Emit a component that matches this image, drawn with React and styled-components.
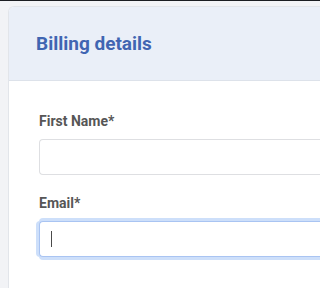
import React from 'react';
import styled, { createGlobalStyle } from 'styled-components';

const GlobalStyle = createGlobalStyle`
  html, body {
    margin: 0;
    padding: 0;
    height: 100%;
  }
  body {
    box-sizing: border-box;
    background-color: #f2f3f6;
    border-top: 1px solid #1b1d22;
    font-family: Roboto, "Liberation Sans", Arial, sans-serif;
    overflow: hidden;
  }
  #root {
    height: 100%;
  }
`;

function App() {
    const fields = [
        { id: 'firstName', label: 'First Name*', focused: false },
        { id: 'email', label: 'Email*', focused: true }
    ];

    return (
        <>
            <GlobalStyle />
            <Page>
                <Card>
                    <CardHeader>
                        <CardTitle>Billing details</CardTitle>
                    </CardHeader>
                    <CardBody>
                        {fields.map(field => (
                            <Field key={field.id}>
                                <Label htmlFor={field.id}>{field.label}</Label>
                                <InputWrap>
                                    <Input id={field.id} type="text" focused={field.focused} readOnly />
                                    {field.focused && <Caret />}
                                </InputWrap>
                            </Field>
                        ))}
                    </CardBody>
                </Card>
            </Page>
        </>
    );
}

const Page = styled.div`
  box-sizing: border-box;
  display: flex;
  height: 100%;
  padding: 5px 0 0 8px;
  overflow: hidden;
`;

const Card = styled.div`
  flex: 1;
  display: flex;
  flex-direction: column;
  background-color: #ffffff;
  border: 1px solid #e2e5ea;
  border-right: none;
  border-bottom: none;
  border-radius: 6px 0 0 0;
  overflow: hidden;
`;

const CardHeader = styled.div`
  display: flex;
  align-items: center;
  height: 73px;
  padding-left: 27px;
  background-color: #eaeff8;
  border-bottom: 1px solid #dde2ea;
`;

const CardTitle = styled.h2`
  margin: 0;
  font-size: 19px;
  font-weight: 700;
  color: #4065b2;
`;

const CardBody = styled.div`
  display: flex;
  flex-direction: column;
  gap: 20px;
  padding: 32px 0 0 30px;
`;

const Field = styled.div`
  display: flex;
  flex-direction: column;
`;

const Label = styled.label`
  font-size: 14px;
  font-weight: 700;
  color: #565656;
  margin-bottom: 10px;
`;

const InputWrap = styled.div`
  position: relative;
  padding-right: 0;
`;

const Input = styled.input`
  box-sizing: border-box;
  width: 100%;
  height: 36px;
  padding: 0 12px;
  font-family: inherit;
  font-size: 14px;
  caret-color: transparent;
  background-color: #ffffff;
  border: 1px solid ${props => props.focused ? '#a9c4f2' : '#dedfe2'};
  border-right: none;
  border-radius: 4px 0 0 4px;
  box-shadow: ${props => props.focused ? '-3px 0 0 0 #cddffa, 0 3px 0 0 #cddffa, 0 -3px 0 0 #cddffa' : 'none'};
  outline: none;
`;

const Caret = styled.span`
  position: absolute;
  left: 12px;
  top: 10px;
  width: 1px;
  height: 16px;
  background-color: #4a4a4a;
`;

export default App;
